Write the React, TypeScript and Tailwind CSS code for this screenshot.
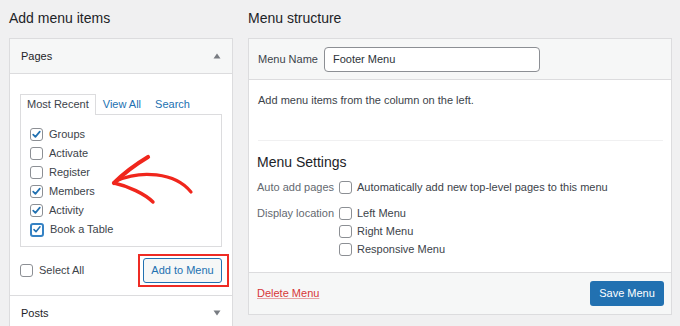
import React from "react";

const font = { fontFamily: '"Liberation Sans", Arial, sans-serif' };

function Box({ checked = false, focus = false }: { checked?: boolean; focus?: boolean }) {
  return (
    <span
      className={
        focus
          ? "flex h-[14px] w-[14px] shrink-0 items-center justify-center rounded-[3px] border-2 border-[#3582c4] bg-white"
          : "flex h-[13px] w-[13px] shrink-0 items-center justify-center rounded-[3px] border border-[#8c8f94] bg-white"
      }
    >
      {checked && (
        <svg width="11" height="11" viewBox="0 0 11 11">
          <path d="M2.2 5.6 L4.4 7.9 L8.8 2.6" fill="none" stroke="#2271b1" strokeWidth="1.7" strokeLinecap="round" strokeLinejoin="round" />
        </svg>
      )}
    </span>
  );
}

function Tri({ up }: { up: boolean }) {
  return (
    <svg width="8" height="6" viewBox="0 0 8 6">
      {up ? <polygon points="0.5,5.5 7.5,5.5 4,0.5" fill="#787c82" /> : <polygon points="0.5,0.5 7.5,0.5 4,5.5" fill="#787c82" />}
    </svg>
  );
}

const pages: [string, boolean][] = [
  ["Groups", true],
  ["Activate", false],
  ["Register", false],
  ["Members", true],
  ["Activity", true],
  ["Book a Table", true],
];

export default function App() {
  return (
    <div className="relative flex h-[326px] w-[680px] overflow-hidden bg-[#f0f0f1] pl-[9px] text-[11px] text-[#3c434a]" style={font}>
      {/* Left column */}
      <div className="flex w-[224px] shrink-0 flex-col">
        <h2 className="mt-[8px] mb-[10px] text-[14px] leading-[20px] text-[#1d2327]">Add menu items</h2>
        <div className="border border-[#dcdcde] bg-white">
          <div className="flex h-[35px] items-center justify-between border-b border-[#dcdcde] bg-[#f6f7f7] pl-[11px] pr-[11px]">
            <span className="text-[11px] text-[#1d2327]">Pages</span>
            <Tri up />
          </div>
          <div className="px-[10px] pt-[20px] pb-[12px]">
            <div className="flex">
              <div className="relative z-10 -mb-px border border-b-0 border-[#dcdcde] bg-white px-[6px] leading-[18px] text-[#3c434a]">Most Recent</div>
              <div className="border border-transparent px-[6px] leading-[18px] text-[#2271b1]">View All</div>
              <div className="border border-transparent px-[6px] leading-[18px] text-[#2271b1]">Search</div>
            </div>
            <div className="border border-[#dcdcde] pt-[10px] pb-[7px] pl-[9px]">
              {pages.map(([label, checked], i) => (
                <div key={label} className="flex h-[19px] items-center gap-[6px]">
                  <Box checked={checked} focus={i === 5} />
                  <span className="text-[#3c434a]">{label}</span>
                </div>
              ))}
            </div>
            <div className="mt-[11px] flex items-center justify-between">
              <div className="flex items-center gap-[6px]">
                <Box />
                <span>Select All</span>
              </div>
              <div className="relative">
                <div className="flex h-[25px] w-[79px] items-center justify-center rounded-[3px] border border-[#2271b1] bg-[#f6f7f7] text-[#2271b1]">Add to Menu</div>
                <div className="pointer-events-none absolute -left-[5px] -top-[4px] -right-[7px] -bottom-[4px] border-2 border-[#ee2b24]" />
              </div>
            </div>
          </div>
          <div className="flex h-[35px] items-center justify-between border-t border-[#dcdcde] pl-[11px] pr-[11px]">
            <span className="text-[11px] text-[#1d2327]">Posts</span>
            <Tri up={false} />
          </div>
        </div>
      </div>

      {/* Right column */}
      <div className="ml-[15px] flex w-[424px] shrink-0 flex-col">
        <h2 className="mt-[8px] mb-[10px] text-[14px] leading-[20px] text-[#1d2327]">Menu structure</h2>
        <div className="border border-[#dcdcde] bg-white">
          <div className="flex h-[41px] items-center border-b border-[#dcdcde] bg-[#f6f7f7] pl-[9px]">
            <span className="mr-[6px] text-[#3c434a]">Menu Name</span>
            <div className="flex h-[25px] w-[216px] items-center rounded-[4px] border border-[#8c8f94] bg-white pl-[8px] text-[#2c3338]">Footer Menu</div>
          </div>
          <div className="pl-[8px] pr-[8px] pb-[14px]">
            <div className="ml-[1px] border-b border-[#f0f0f1] pt-[12px] pb-[32px] leading-[16px]">Add menu items from the column on the left.</div>
            <h3 className="mt-[11px] text-[14px] leading-[20px] text-[#1d2327]">Menu Settings</h3>
            <div className="mt-[6px] flex h-[18px] items-center">
              <span className="w-[82px] text-[#646970]">Auto add pages</span>
              <Box />
              <span className="ml-[5px]">Automatically add new top-level pages to this menu</span>
            </div>
            <div className="mt-[8px] flex">
              <span className="flex h-[18px] w-[82px] items-center text-[#646970]">Display location</span>
              <div className="flex flex-col">
                {["Left Menu", "Right Menu", "Responsive Menu"].map((l) => (
                  <div key={l} className="flex h-[18px] items-center">
                    <Box />
                    <span className="ml-[5px]">{l}</span>
                  </div>
                ))}
              </div>
            </div>
          </div>
          <div className="flex h-[42px] items-center justify-between border-t border-[#dcdcde] bg-[#f6f7f7] pl-[8px] pr-[7px]">
            <span className="text-[#d63638] underline decoration-[#e6a2a3]">Delete Menu</span>
            <div className="flex h-[25px] w-[74px] items-center justify-center rounded-[3px] bg-[#2271b1] text-white">Save Menu</div>
          </div>
        </div>
      </div>

      {/* Red annotation arrow */}
      <svg className="pointer-events-none absolute left-0 top-0" width="680" height="326" viewBox="0 0 680 326">
        <g fill="none" stroke="#f0261c" strokeLinecap="round" strokeLinejoin="round">
          <path d="M116 181 C140 170, 175 172, 191 192" strokeWidth="3.2" />
          <path d="M148 157 C138 163, 125 172, 114 183" strokeWidth="4.2" />
          <path d="M114 183 C128 186, 145 194, 153 202" strokeWidth="3.4" />
        </g>
      </svg>
    </div>
  );
}
